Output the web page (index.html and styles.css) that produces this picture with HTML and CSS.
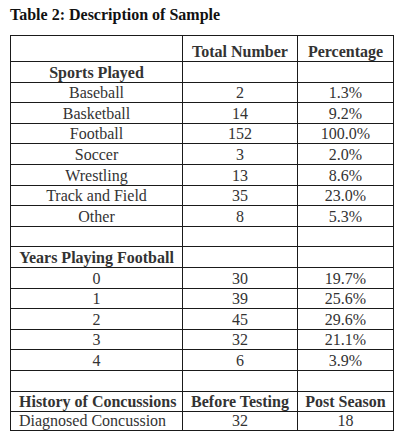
FILE: index.html
```html
<!DOCTYPE html>
<html lang="en">
<head>
    <meta charset="UTF-8">
    <title>Table 2</title>
    <link rel="stylesheet" href="styles.css">
</head>
<body>
    <div class="page">
        <h1 class="table-title">Table 2: Description of Sample</h1>

        <table class="sample-table">
            <colgroup>
                <col class="col-label">
                <col class="col-num">
                <col class="col-pct">
            </colgroup>
            <tr class="head-row">
                <td></td>
                <td class="bold">Total Number</td>
                <td class="bold">Percentage</td>
            </tr>
            <tr>
                <td class="bold">Sports Played</td>
                <td></td>
                <td></td>
            </tr>
            <tr><td>Baseball</td><td>2</td><td>1.3%</td></tr>
            <tr><td>Basketball</td><td>14</td><td>9.2%</td></tr>
            <tr><td>Football</td><td>152</td><td>100.0%</td></tr>
            <tr><td>Soccer</td><td>3</td><td>2.0%</td></tr>
            <tr><td>Wrestling</td><td>13</td><td>8.6%</td></tr>
            <tr><td>Track and Field</td><td>35</td><td>23.0%</td></tr>
            <tr><td>Other</td><td>8</td><td>5.3%</td></tr>
            <tr><td></td><td></td><td></td></tr>
            <tr>
                <td class="bold">Years Playing Football</td>
                <td></td>
                <td></td>
            </tr>
            <tr><td>0</td><td>30</td><td>19.7%</td></tr>
            <tr><td>1</td><td>39</td><td>25.6%</td></tr>
            <tr><td>2</td><td>45</td><td>29.6%</td></tr>
            <tr><td>3</td><td>32</td><td>21.1%</td></tr>
            <tr><td>4</td><td>6</td><td>3.9%</td></tr>
            <tr><td></td><td></td><td></td></tr>
            <tr>
                <td class="bold left">History of Concussions</td>
                <td class="bold">Before Testing</td>
                <td class="bold">Post Season</td>
            </tr>
            <tr class="last-row">
                <td class="left">Diagnosed Concussion</td>
                <td>32</td>
                <td>18</td>
            </tr>
        </table>
    </div>
</body>
</html>
```

FILE: styles.css
```css
* {
    margin: 0;
    padding: 0;
    box-sizing: border-box;
}

body {
    background-color: #ffffff;
    color: #333333;
    font-family: 'Liberation Serif', 'Times New Roman', serif;
    font-size: 16px;
}

.page {
    padding: 5px 9px 0 10px;
}

.table-title {
    font-size: 16px;
    font-weight: bold;
    color: #111;
    line-height: 20px;
    margin-bottom: 10px;
}

.sample-table {
    border-collapse: collapse;
    table-layout: fixed;
    width: 383px;
}

.col-label {
    width: 172px;
}

.col-num {
    width: 115px;
}

.col-pct {
    width: 96px;
}

.sample-table td {
    border: 1px solid #1a1a1a;
    height: 20.6px;
    line-height: 18px;
    padding: 0 3px;
    text-align: center;
    vertical-align: bottom;
    white-space: nowrap;
}

.sample-table .head-row td {
    height: 26px;
}

.sample-table .last-row td {
    height: 19px;
}

.bold {
    font-weight: bold;
}

.sample-table td.left {
    text-align: left;
    padding-left: 8px;
}
```
